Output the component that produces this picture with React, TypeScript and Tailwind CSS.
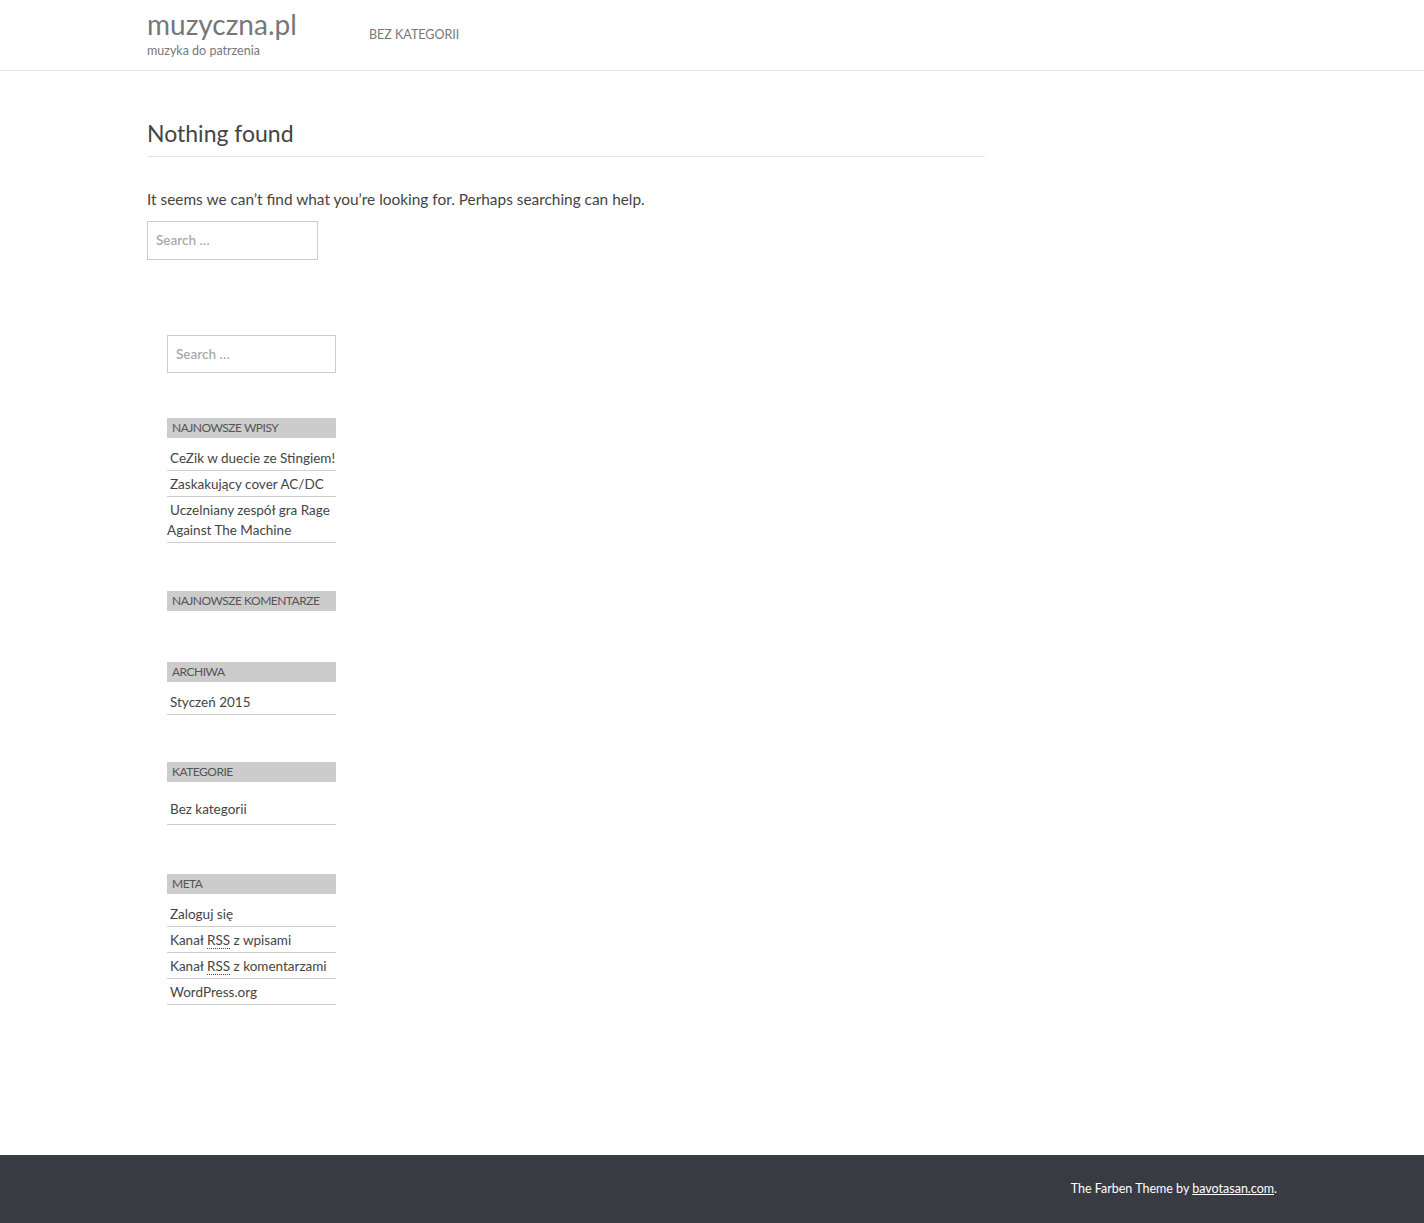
export default function App() {
  const font = { fontFamily: "Lato, 'Open Sans', sans-serif" };
  return (
    <div className="flex min-h-[1223px] flex-col bg-white text-[#444]" style={font}>
      <header className="h-[71px] border-b border-[#e3e3e3]">
        <div className="mx-auto flex w-[1130px] items-start">
          <div className="w-[222px] pt-[5px]">
            <div className="text-[28px] leading-[39px] text-[#777]">muzyczna.pl</div>
            <div className="text-[12.5px] leading-[14px] text-[#777]">muzyka do patrzenia</div>
          </div>
          <nav className="pt-[25px] text-[12.5px] leading-[20px] uppercase text-[#777]">Bez kategorii</nav>
        </div>
      </header>

      <main className="mx-auto w-[1130px] flex-1">
        <div className="w-[838px] pt-[45px]">
          <h1 className="border-b border-[#e5e5e5] pb-[6px] text-[23px] leading-[34px] text-[#444]">
            Nothing found
          </h1>
          <p className="mt-[31px] text-[15.4px] leading-[22px]">
            It seems we can’t find what you’re looking for. Perhaps searching can help.
          </p>
          <SearchBox className="mt-[11px] h-[39px] w-[171px]" />
        </div>

        <aside className="ml-[20px] w-[169px] pt-[75px] pb-[150px]">
          <SearchBox className="h-[38px] w-[169px]" />

          <Widget title="Najnowsze wpisy" className="mt-[45px]">
            <Item>CeZik w duecie ze Stingiem!</Item>
            <Item>Zaskakujący cover AC/DC</Item>
            <Item>Uczelniany zespół gra Rage Against The Machine</Item>
          </Widget>

          <Widget title="Najnowsze komentarze" className="mt-[48px]" />

          <Widget title="Archiwa" className="mt-[51px]">
            <Item>Styczeń 2015</Item>
          </Widget>

          <Widget title="Kategorie" className="mt-[47px]">
            <div className="border-b border-[#ccc] pt-[10px] pb-[5px] pl-[3px] text-[13.5px] leading-[20px]">Bez kategorii</div>
          </Widget>

          <Widget title="Meta" className="mt-[49px]">
            <Item>Zaloguj się</Item>
            <Item>
              Kanał <abbr className="border-b border-dotted border-[#444] no-underline">RSS</abbr> z wpisami
            </Item>
            <Item>
              Kanał <abbr className="border-b border-dotted border-[#444] no-underline">RSS</abbr> z komentarzami
            </Item>
            <Item>WordPress.org</Item>
          </Widget>
        </aside>
      </main>

      <footer className="h-[68px] bg-[#393b43]">
        <div className="mx-auto flex h-full w-[1130px] items-center justify-end text-[12.5px] text-white">
          <span>
            The Farben Theme by <span className="underline">bavotasan.com</span>.
          </span>
        </div>
      </footer>
    </div>
  );
}

function SearchBox({ className = "" }: { className?: string }) {
  return (
    <div className={`flex items-center border border-[#ccc] px-[8px] ${className}`}>
      <span className="text-[13.5px] font-semibold text-[#aaa]">Search …</span>
    </div>
  );
}

function Widget({
  title,
  className = "",
  children,
}: {
  title: string;
  className?: string;
  children?: React.ReactNode;
}) {
  return (
    <div className={className}>
      <h3 className="h-[20px] bg-[#ccc] pl-[5px] text-[12px] leading-[20px] tracking-[-0.5px] uppercase text-[#555]">{title}</h3>
      {children ? <ul className="pt-[7px]">{children}</ul> : null}
    </div>
  );
}

function Item({ children }: { children: React.ReactNode }) {
  return (
    <li className="border-b border-[#ccc] pt-[3px] pb-[2px] text-[13.5px] leading-[20px]">
      <span className="pl-[3px]">{children}</span>
    </li>
  );
}
